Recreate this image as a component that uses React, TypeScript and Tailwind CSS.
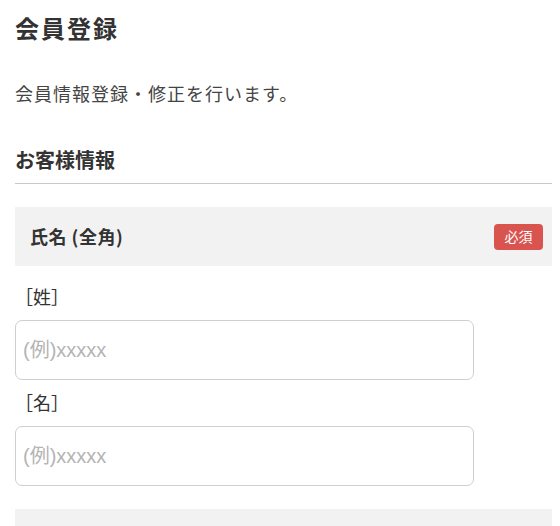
export default function App() {
  const fields = [
    { label: "［姓］", placeholder: "(例)xxxxx" },
    { label: "［名］", placeholder: "(例)xxxxx" },
  ];

  return (
    <div
      className="min-h-screen bg-white pl-[15px] pr-[8px] pt-[10px] text-[#333]"
      style={{ fontFamily: '"Noto Sans CJK JP", "Noto Sans", sans-serif' }}
    >
      <h1 className="text-[24px] leading-[36px] font-bold tracking-[2px] text-[#333]">
        会員登録
      </h1>

      <p className="mt-[34px] text-[18px] leading-[27px] tracking-[1px] text-[#444]">
        会員情報登録・修正を行います。
      </p>

      {/* section heading */}
      <h2 className="mt-[38px] pb-[8px] border-b border-[#c8c8c8] text-[20px] leading-[30px] font-bold text-[#333]">
        お客様情報
      </h2>

      <div className="mt-[23px] h-[59px] bg-[#f2f2f2] flex items-center justify-between pl-[15px] pr-[9px]">
        <span className="text-[18px] font-bold tracking-[0.5px] text-[#333]">氏名 (全角)</span>
        <span className="h-[26px] w-[49px] rounded-[4px] bg-[#d9534f] text-white text-[14px] flex items-center justify-center">
          必須
        </span>
      </div>

      <div className="mt-[17px] flex flex-col">
        {fields.map((f, i) => (
          <div key={i} className={i > 0 ? "mt-[9px]" : ""}>
            <div className="text-[18px] leading-[27px] text-[#333]">{f.label}</div>
            <input
              type="text"
              placeholder={f.placeholder}
              className="mt-[10px] block w-[459px] h-[60px] rounded-[7px] border border-[#cfcfcf] pl-[7px] text-[20px] text-[#333] placeholder:text-[#b4b4b4] outline-none"
              style={{ fontFamily: '"Liberation Sans", "Noto Sans CJK JP", sans-serif' }}
            />
          </div>
        ))}
      </div>

      <div className="mt-[23px] h-[59px] bg-[#f2f2f2]" />
    </div>
  );
}
